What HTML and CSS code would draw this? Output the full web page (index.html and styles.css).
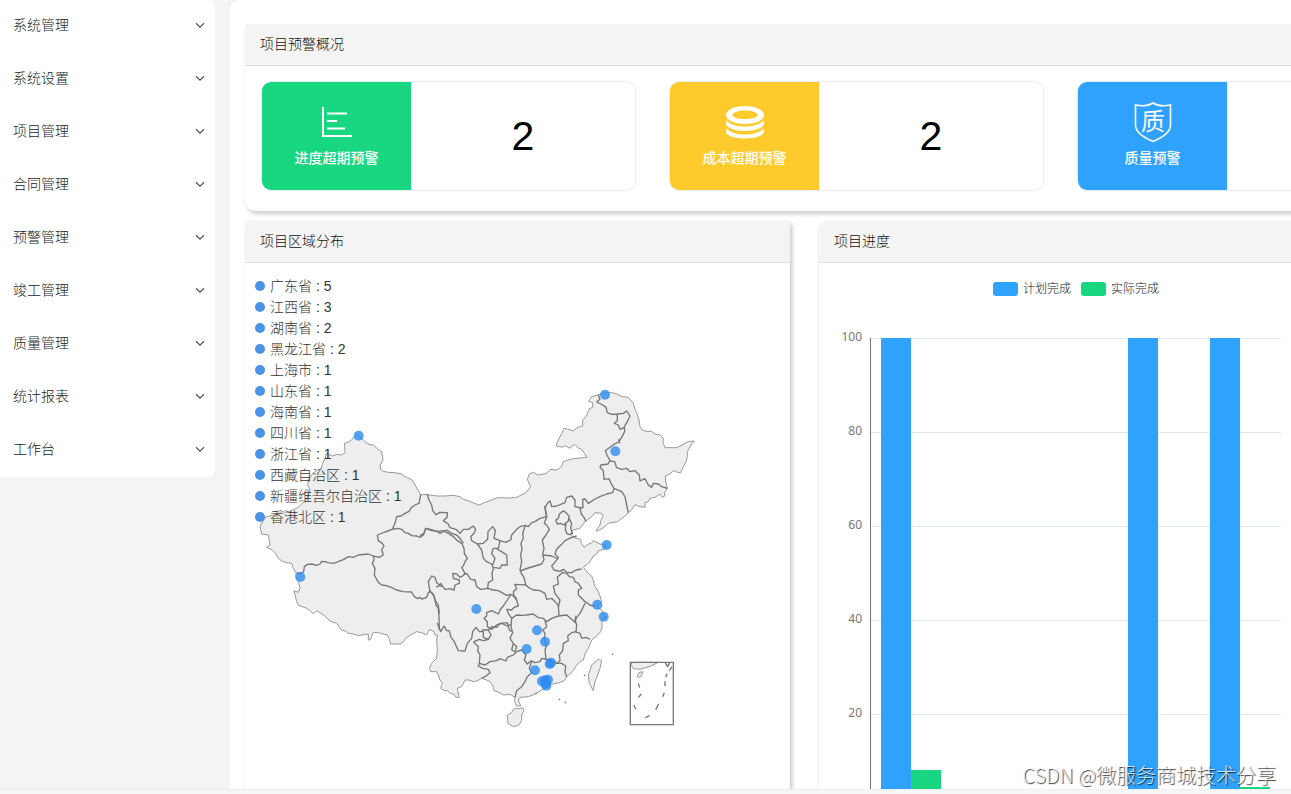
FILE: index.html
```html
<!DOCTYPE html>
<html lang="zh-CN">
<head>
<meta charset="utf-8">
<title>项目管理工作台</title>
<link rel="stylesheet" href="styles.css">
</head>
<body>
<svg class="defs" aria-hidden="true">
  <symbol id="chevron" viewBox="0 0 10 7"><path d="M1 1.200 5 5.200 9 1.200" fill="none" stroke="currentColor" stroke-width="1.300"/></symbol>
</svg>
<div class="app">
  <nav class="sidebar">
    <button class="nav-item">系统管理<svg class="chevron"><use href="#chevron"/></svg></button>
    <button class="nav-item">系统设置<svg class="chevron"><use href="#chevron"/></svg></button>
    <button class="nav-item">项目管理<svg class="chevron"><use href="#chevron"/></svg></button>
    <button class="nav-item">合同管理<svg class="chevron"><use href="#chevron"/></svg></button>
    <button class="nav-item">预警管理<svg class="chevron"><use href="#chevron"/></svg></button>
    <button class="nav-item">竣工管理<svg class="chevron"><use href="#chevron"/></svg></button>
    <button class="nav-item">质量管理<svg class="chevron"><use href="#chevron"/></svg></button>
    <button class="nav-item">统计报表<svg class="chevron"><use href="#chevron"/></svg></button>
    <button class="nav-item">工作台<svg class="chevron"><use href="#chevron"/></svg></button>
  </nav>

  <main class="main">
    <section class="panel overview">
      <h2 class="panel-title">项目预警概况</h2>
      <div class="cards">
        <article class="card">
          <div class="card-label green">
            <svg class="icon" viewBox="0 0 40 40" fill="none" stroke="#fff" stroke-width="2"><path d="M6 5V34H35M10 11.500H30M10 19H20M10 26.500H28" /></svg>
            <span>进度超期预警</span>
          </div>
          <div class="card-value">2</div>
        </article>
        <article class="card">
          <div class="card-label yellow">
            <svg class="icon" viewBox="0 0 40 40"><path fill="#fff" fill-rule="evenodd" d="M20 4C9 4 1 8 1 13s8 9 19 9 19-4 19-9-8-9-19-9Zm0 4.500c7 0 12.500 2 12.500 4.500S27 17 20 17 7.500 15.500 7.500 13 13 8.500 20 8.500Z"/><path fill="#fff" d="M2 18.500C5 22.500 12 24.500 20 24.500s15-2 18-6c1 1 1 2 1 3 0 4-8 7.500-19 7.500S1 25.500 1 21.500c0-1 0-2 1-3ZM2 26.500c3 4 10 6 18 6s15-2 18-6c1 1 1 2 1 3 0 4-8 7-19 7s-19-3-19-7c0-1 0-2 1-3Z"/></svg>
            <span>成本超期预警</span>
          </div>
          <div class="card-value">2</div>
        </article>
        <article class="card">
          <div class="card-label blue">
            <svg class="icon" viewBox="0 0 40 40"><path fill="none" stroke="#fff" stroke-width="1.600" d="M20 1c4 2.500 10 3.500 17.500 2V23c0 7-8 12.500-17.500 16.500C10.500 35.500 2.500 30 2.500 23V3C10 4.500 16 3.500 20 1Z"/><text class="shield-text" x="20" y="28" text-anchor="middle">质</text></svg>
            <span>质量预警</span>
          </div>
          <div class="card-value"></div>
        </article>
      </div>
    </section>

    <div class="row">
      <section class="panel">
        <h2 class="panel-title">项目区域分布</h2>
        <div class="map-box">
          <svg class="map" viewBox="0 0 1635 1110" role="img" aria-label="项目区域分布地图">
            <path class="land" d="M45 440 60 412 85 405 98 402 110 395 125 397 140 392 160 382 182 360 190 345 195 330 188 315 190 300 200 285 215 270 228 268 233 250 240 235 244 220 262 228 275 223 290 225 300 218 298 190 312 185 320 180 328 170 341 167 350 174 360 185 372 193 385 195 398 207 410 215 414 240 406 255 406 268 415 274 430 277 450 278 470 282 480 290 502 300 510 315 520 332 527 344 547 344 575 348 600 348 625 346 645 350 655 358 670 362 688 370 703 375 718 368 735 362 755 354 770 353 795 354 815 352 825 347 840 340 857 321 847 298 853 282 865 277 880 285 905 280 915 268 930 270 940 268 950 258 955 245 970 240 985 236 1005 234 1026 232 1019 221 1010 208 1000 204 990 194 982 197 975 205 960 197 952 202 935 198 935 190 944 172 958 144 968 148 985 152 998 142 1013 138 1013 122 1022 110 1030 95 1033 86 1043 82 1043 68 1031 64 1040 50 1065 43 1080 38 1100 38 1115 42 1132 50 1150 52 1165 70 1170 88 1175 98 1182 120 1185 140 1192 150 1205 154 1220 154 1230 162 1245 165 1255 175 1254 188 1260 203 1295 203 1305 198 1320 190 1330 185 1348 183 1340 192 1327 215 1327 230 1323 245 1315 260 1307 278 1297 277 1285 272 1275 282 1261 288 1262 306 1267 325 1258 338 1260 347 1252 352 1245 342 1230 352 1215 355 1210 365 1200 368 1200 382 1185 380 1170 374 1158 392 1150 398 1138 410 1130 415 1117 425 1100 428 1090 430 1075 443 1060 452 1053 453 1065 435 1068 420 1075 408 1070 400 1050 398 1040 410 1020 425 1005 445 983 450 977 462 985 472 1007 478 1009 490 1017 502 1030 492 1038 490 1045 482 1065 492 1085 495 1078 508 1060 512 1055 522 1045 528 1035 545 1015 562 1030 580 1040 588 1045 600 1047 610 1050 620 1058 630 1065 648 1070 665 1055 680 1073 693 1080 712 1070 725 1072 740 1067 755 1055 768 1040 780 1030 805 1020 822 1015 840 1005 845 995 855 985 872 965 890 958 902 940 909 920 912 910 922 890 930 870 942 850 950 825 952 820 960 827 978 815 978 809 965 810 952 795 943 775 945 762 937 747 932 743 915 735 905 725 900 710 895 698 902 685 905 672 900 660 900 655 910 650 920 637 925 643 952 633 952 628 943 615 940 608 932 598 932 587 925 592 910 585 900 580 885 575 875 557 875 553 865 560 850 575 835 577 810 575 785 577 765 570 765 567 755 553 748 545 765 530 758 515 755 500 763 485 772 475 785 465 792 437 792 432 775 427 765 400 758 385 757 375 780 370 780 370 762 340 767 325 762 310 760 300 752 290 750 275 730 255 723 240 708 225 698 215 692 205 702 195 692 185 685 160 675 155 665 147 632 160 637 165 625 160 605 153 592 153 578 145 565 140 550 125 548 112 544 100 535 92 520 82 510 65 502 75 495 70 465 50 462Z"/>
            <g class="borders" transform="translate(0 120)">
              <path d="M527 224 522 250 510 255 500 262 492 274 480 280 468 288 455 290 450 310 442 328 420 336 397 345 400 362 412 370 417 378 410 390 415 405 402 412 385 408 370 402 340 405 325 412 310 410 295 419 280 425 265 430 250 428 240 425 230 424 225 432 215 436 200 432 188 433 178 440 176 455 167 462 155 458"/>
              <path d="M442 328 458 325 470 328 480 338 490 340 500 347 515 348 525 352 535 345 542 325 560 332 575 333 585 340 605 330 620 340 635 345 645 355 655 370"/>
              <path d="M385 408 387 420 382 430 390 445 388 465 400 487 410 495 425 497 440 503 455 510 475 515 500 516 508 530 518 536 525 532 530 537 545 532 550 518 555 515 550 485 560 468 570 472 575 488 590 500"/>
              <path d="M555 515 565 522 570 540 580 555 583 580"/>
            </g>
            <g class="borders" transform="translate(495 0)">
              <path d="M565 45 570 58 560 66 578 75 588 82 592 98 605 103 622 102 640 100 650 93 660 108 652 125 643 140 644 155 635 172 626 186 610 194 586 212 592 228 600 240M622 102 622 122 613 130 625 135 630 148 643 142M625 178 630 190M600 240 594 252 573 255 570 262 580 272 582 298 597 296 603 310 612 325 635 335 645 350 650 375 655 398"/>
              <path d="M598 243 614 245 620 263 635 268 650 265 660 275 675 272 688 285 690 303 705 296 715 315 725 322 730 310 745 312 755 320 772 325"/>
              <path d="M612 325 608 338 590 342 570 350 555 357 535 370 525 357 518 358 519 383 510 386 514 402 522 412 528 424M410 412 405 385 412 370 420 363 425 380 440 378 465 368 470 352 485 348 495 360 495 380 515 384"/>
            </g>
            <g class="borders" transform="translate(525 330)">
              <path d="M22 12 27 30 35 45 38 62 48 74 60 67 82 68 82 80 70 92 85 102 90 113 108 118 120 130 130 118 145 118 160 108 167 118 162 130 152 140 155 152 172 162 190 160 203 148 204 125 218 110 226 122 222 145 240 152 258 157 272 150 275 135 290 118 300 110 316 106 325 110 335 98 345 95 360 85 380 80"/>
              <path d="M0 137 12 130 18 115 38 120 50 125 70 122 85 130 100 140 112 152 125 160 132 175 133 190 142 205 135 215 130 228 125 232 135 250 128 258 120 262 110 252 98 250 100 265 118 270 118 280 105 285 102 300 90 296 75 298 62 280 55 290 48 290"/>
              <path d="M130 255 140 250 152 268 165 270 170 290 182 298 203 295 220 300 235 302 250 310 260 316 272 313 285 320 290 328"/>
              <path d="M172 162 185 180 190 205 200 215 215 222 220 235 216 250 218 270 205 278 203 295M240 152 235 175 220 175 215 190 225 205 218 225M230 177 245 185 260 195 262 225 245 225 240 235 220 232"/>
              <path d="M316 106 308 130 310 145 303 160 306 178 302 195 305 215 300 240 305 252 312 262 315 275 318 285M300 243 325 234 345 228 365 222 372 208 368 195 372 175 367 150 378 135 388 118 380 105 373 100 380 80 378 65 374 48"/>
              <path d="M470 138 455 142 435 152 425 163 410 178 405 192 415 203 402 220 395 228 402 240 420 244 430 238 442 248 455 248 468 240 485 237M370 195 395 198 415 207"/>
              <path d="M430 62 440 70 448 80 444 95 438 98 432 105 422 100 412 102 407 90 415 85 418 72ZM445 82 455 100 452 115 458 130 448 134 440 130 436 118 438 98"/>
              <path d="M425 248 440 250 448 260 460 262 465 275 475 280 485 295 475 300 475 315 485 325 495 335 510 345 525 350M430 245 412 262 415 282 400 288 405 310 412 320 420 330 415 350 417 375M318 285 325 292 340 300 360 302 375 310 380 328 395 325 405 335 418 350"/>
              <path d="M495 340 488 355 480 370 470 382 465 395M318 285 300 284 284 283 290 296 280 305 282 320 290 330 295 348 282 352 275 360 260 358 265 370 275 385 290 375 310 376 340 372 355 383 370 385 380 395 395 385 415 378 440 375 455 388 468 400M272 313 262 330 252 345 240 360 235 372 215 362 200 368 200 378 192 385 202 395 202 410 215 418 230 405 245 400 262 408 275 402"/>
              <path d="M28 300 43 320 48 345 55 355 57 380 58 420"/>
            </g>
            <g class="borders" transform="translate(525 660)">
              <path d="M58 85 52 70 62 95 72 78 80 92 88 92 92 110 103 125 115 152 135 153 142 130 155 115 158 95 168 82 178 95 190 95 190 112 205 118 190 122 178 118 162 125"/>
              <path d="M185 90 205 90 215 80 230 82 240 70 262 68 268 90 275 95M205 90 213 105 205 118M160 125 175 140 173 152 180 165 178 190 195 195 210 185 230 182 240 176 258 183 262 172 280 165 290 155"/>
              <path d="M275 55 273 80 278 98 270 115 280 130 275 150 285 155 290 140 282 132M290 155 305 150 318 165 313 180 322 192 333 182 345 188 360 185 365 175 378 178 375 150 380 135 372 118 375 100 368 90 380 80 375 62"/>
              <path d="M178 190 175 198 188 205 205 208 210 218 198 228 185 235M335 185 328 205 335 218 322 230 315 245 305 260 290 272 285 292M378 178 395 180 410 190 420 182 418 165 428 152 430 130 445 122 443 108 455 98 468 95 470 75 465 60 468 48"/>
              <path d="M465 95 480 100 485 115 498 112 510 118M410 190 425 190 437 198 435 215 440 230"/>
            </g>
            <g transform="translate(525 660)">
              <path class="land" d="M535 178 545 182 540 205 533 225 525 245 520 272 508 250 505 225 510 212 515 195ZM290 325 300 326 308 322 312 332 305 345 305 362 296 376 280 380 264 370 262 345 275 338 280 328Z"/>
              <path class="land" d="M632 192 640 206 660 208 690 199 715 187H640ZM658 217 668 215 665 227 655 233 652 229Z"/>
              <path class="borders" d="M631 187H760V374H631ZM735 187 743 200 750 187M756 200 748 212M741 221 737 232M735 244V258M733 278 728 290M716 312 707 329M689 347 676 353M642 315 647 327M664 282 655 293M655 250 659 263M417 297 420 300M434 306 438 309M492 225 495 228M555 50 560 52M576 162 580 164M346 282 350 279"/>
            </g>
            <g class="pins">
              <circle cx="341" cy="167" r="15"/><circle cx="166" cy="591" r="15"/><circle cx="1080" cy="44" r="15"/><circle cx="1111" cy="214" r="15"/><circle cx="1085" cy="495" r="15"/><circle cx="694" cy="687" r="15"/><circle cx="1057" cy="674" r="15"/><circle cx="1076" cy="710" r="15"/><circle cx="876" cy="751" r="15"/><circle cx="900" cy="785" r="15"/><circle cx="845" cy="807" r="15"/><circle cx="870" cy="871" r="15"/><circle cx="914" cy="852" r="15"/><circle cx="918" cy="848" r="15"/><circle cx="891" cy="904" r="15"/><circle cx="901" cy="901" r="15"/><circle cx="909" cy="899" r="15"/><circle cx="901" cy="911" r="15"/><circle cx="904" cy="917" r="15"/>
            </g>
          </svg>
          <ul class="region-list">
            <li>广东省 : 5</li><li>江西省 : 3</li><li>湖南省 : 2</li><li>黑龙江省 : 2</li><li>上海市 : 1</li><li>山东省 : 1</li><li>海南省 : 1</li><li>四川省 : 1</li><li>浙江省 : 1</li><li>西藏自治区 : 1</li><li>新疆维吾尔自治区 : 1</li><li>香港北区 : 1</li>
          </ul>
        </div>
      </section>

      <section class="panel progress">
        <h2 class="panel-title">项目进度</h2>
        <div class="chart-box">
          <div class="legend">
            <span class="legend-item"><i class="swatch blue"></i>计划完成</span>
            <span class="legend-item"><i class="swatch green"></i>实际完成</span>
          </div>
          <svg class="chart" viewBox="0 0 514 500" role="img" aria-label="项目进度柱状图">
            <path class="grid-line" d="M52 18.500H462M52 112.500H462M52 206.500H462M52 300.500H462M52 394.500H462"/>
            <path class="axis-line" d="M51.500 18V489M51 488.500H462"/>
            <g class="axis-text" text-anchor="end"><text x="43" y="21">100</text><text x="43" y="115">80</text><text x="43" y="209">60</text><text x="43" y="303">40</text><text x="43" y="397">20</text></g>
            <g class="bar-plan"><rect x="62" y="18" width="30" height="470"/><rect x="309" y="18" width="30" height="470"/><rect x="391" y="18" width="30" height="470"/></g>
            <g class="bar-actual"><rect x="92" y="450" width="30" height="38"/><rect x="421" y="467" width="30" height="21"/></g>
          </svg>
        </div>
      </section>
    </div>
  </main>
</div>
<footer class="footer"></footer>
<div class="watermark">CSDN @微服务商城技术分享</div>
</body>
</html>
```
FILE: styles.css
```css
* { box-sizing: border-box; }

body {
  margin: 0;
  height: 100vh;
  display: flex;
  flex-direction: column;
  overflow: hidden;
  background: #f4f4f4;
  color: #111;
  font: 300 14px/22px "Liberation Sans", "Noto Sans CJK SC", sans-serif;
}

.defs { position: absolute; width: 0; height: 0; }

.app {
  flex: 1;
  min-height: 0;
  display: flex;
  align-items: flex-start;
  gap: 15px;
  overflow: hidden;
}

.footer { height: 5px; background: #f5f6f8; border-top: 1px solid #eee; }

.sidebar {
  flex: 0 0 215px;
  display: flex;
  flex-direction: column;
  background: #fff;
  border-radius: 0 8px 8px 0;
}

.nav-item {
  display: flex;
  align-items: center;
  justify-content: space-between;
  padding: 14px 10px 17px 13px;
  border: 0;
  background: none;
  color: #222;
  font: inherit;
  text-align: left;
  cursor: pointer;
}

.chevron { width: 10px; height: 7px; color: #555; }

.main {
  flex: 0 0 auto;
  padding: 24px 15px 15px;
  display: flex;
  flex-direction: column;
  gap: 10px;
  background: #fff;
  border-radius: 10px 0 0 0;
}

.panel {
  background: #fff;
  border-radius: 4px 4px 10px 10px;
  box-shadow: 2px 3px 4px rgba(0, 0, 0, 0.2);
}

.panel-title {
  margin: 0;
  padding: 9px 15px 10px;
  background: #f4f4f4;
  border-bottom: 1px solid #ddd;
  border-radius: 4px 4px 0 0;
  font-size: 14px;
  font-weight: 300;
}

.cards { display: flex; gap: 33px; padding: 15px 16px 20px; }

.card {
  flex: 0 0 375px;
  display: flex;
  border: 1px solid #ebeef5;
  border-radius: 10px;
  overflow: hidden;
}

.card-label {
  flex: 0 0 149px;
  height: 108px;
  padding-top: 20px;
  display: flex;
  flex-direction: column;
  align-items: center;
  gap: 5px;
  color: #fff;
  font-weight: 500;
}

.icon { width: 40px; height: 40px; }
.shield-text { fill: #fff; font-size: 24px; font-weight: 400; font-family: "Noto Sans CJK SC", sans-serif; }

.green { background: #19d680; }
.yellow { background: #ffca2c; }
.blue { background: #2ea2fc; }

.card-value {
  flex: 1;
  display: flex;
  align-items: center;
  justify-content: center;
  color: #000;
  font-size: 41px;
}

.row { display: grid; grid-template-columns: 545px 1fr; gap: 29px; }
.row .panel { box-shadow: 2px 2px 4px rgba(0, 0, 0, 0.22); }
.row .progress { box-shadow: 0 1px 3px rgba(0, 0, 0, 0.15); }
.row .progress, .progress .panel-title { border-top-left-radius: 10px; }

.map-box { position: relative; padding-top: 117px; min-height: 570px; }
.map { display: block; width: 100%; }

.land { fill: #eee; stroke: #999; stroke-width: 3; stroke-linejoin: round; }
.borders { fill: none; stroke: #777; stroke-width: 4; stroke-linejoin: round; }
.pins { fill: #2d8cf0; fill-opacity: 0.8; }

.region-list {
  position: absolute;
  top: 13px;
  left: 10px;
  margin: 0;
  padding: 0;
  list-style: none;
  color: #333;
  line-height: 21px;
}

.region-list li { display: flex; align-items: center; gap: 5px; }
.region-list li::before {
  content: "";
  width: 10px;
  height: 10px;
  margin-bottom: 2px;
  border-radius: 50%;
  background: #4a94e8;
}

.chart-box { width: 514px; padding-top: 15px; }
.legend { display: flex; justify-content: center; gap: 10px; font-size: 12px; color: #111; }
.legend-item { display: flex; align-items: center; gap: 5px; }
.swatch { width: 25px; height: 14px; border-radius: 3px; }

.chart { display: block; width: 100%; margin-top: 20px; }
.grid-line { stroke: #e0e6f1; fill: none; }
.axis-line { stroke: #6e7079; fill: none; }
.axis-text { fill: #777; font: 12px "Noto Sans", sans-serif; }
.bar-plan { fill: #2ea2fc; }
.bar-actual { fill: #19d680; }

.watermark {
  position: absolute;
  right: 15px;
  bottom: 4px;
  color: rgba(255, 255, 255, 0.8);
  font: 300 20px/30px "Noto Sans CJK SC", sans-serif;
  text-shadow: 1px 1px 1px rgba(0, 0, 0, 0.8);
}
```
